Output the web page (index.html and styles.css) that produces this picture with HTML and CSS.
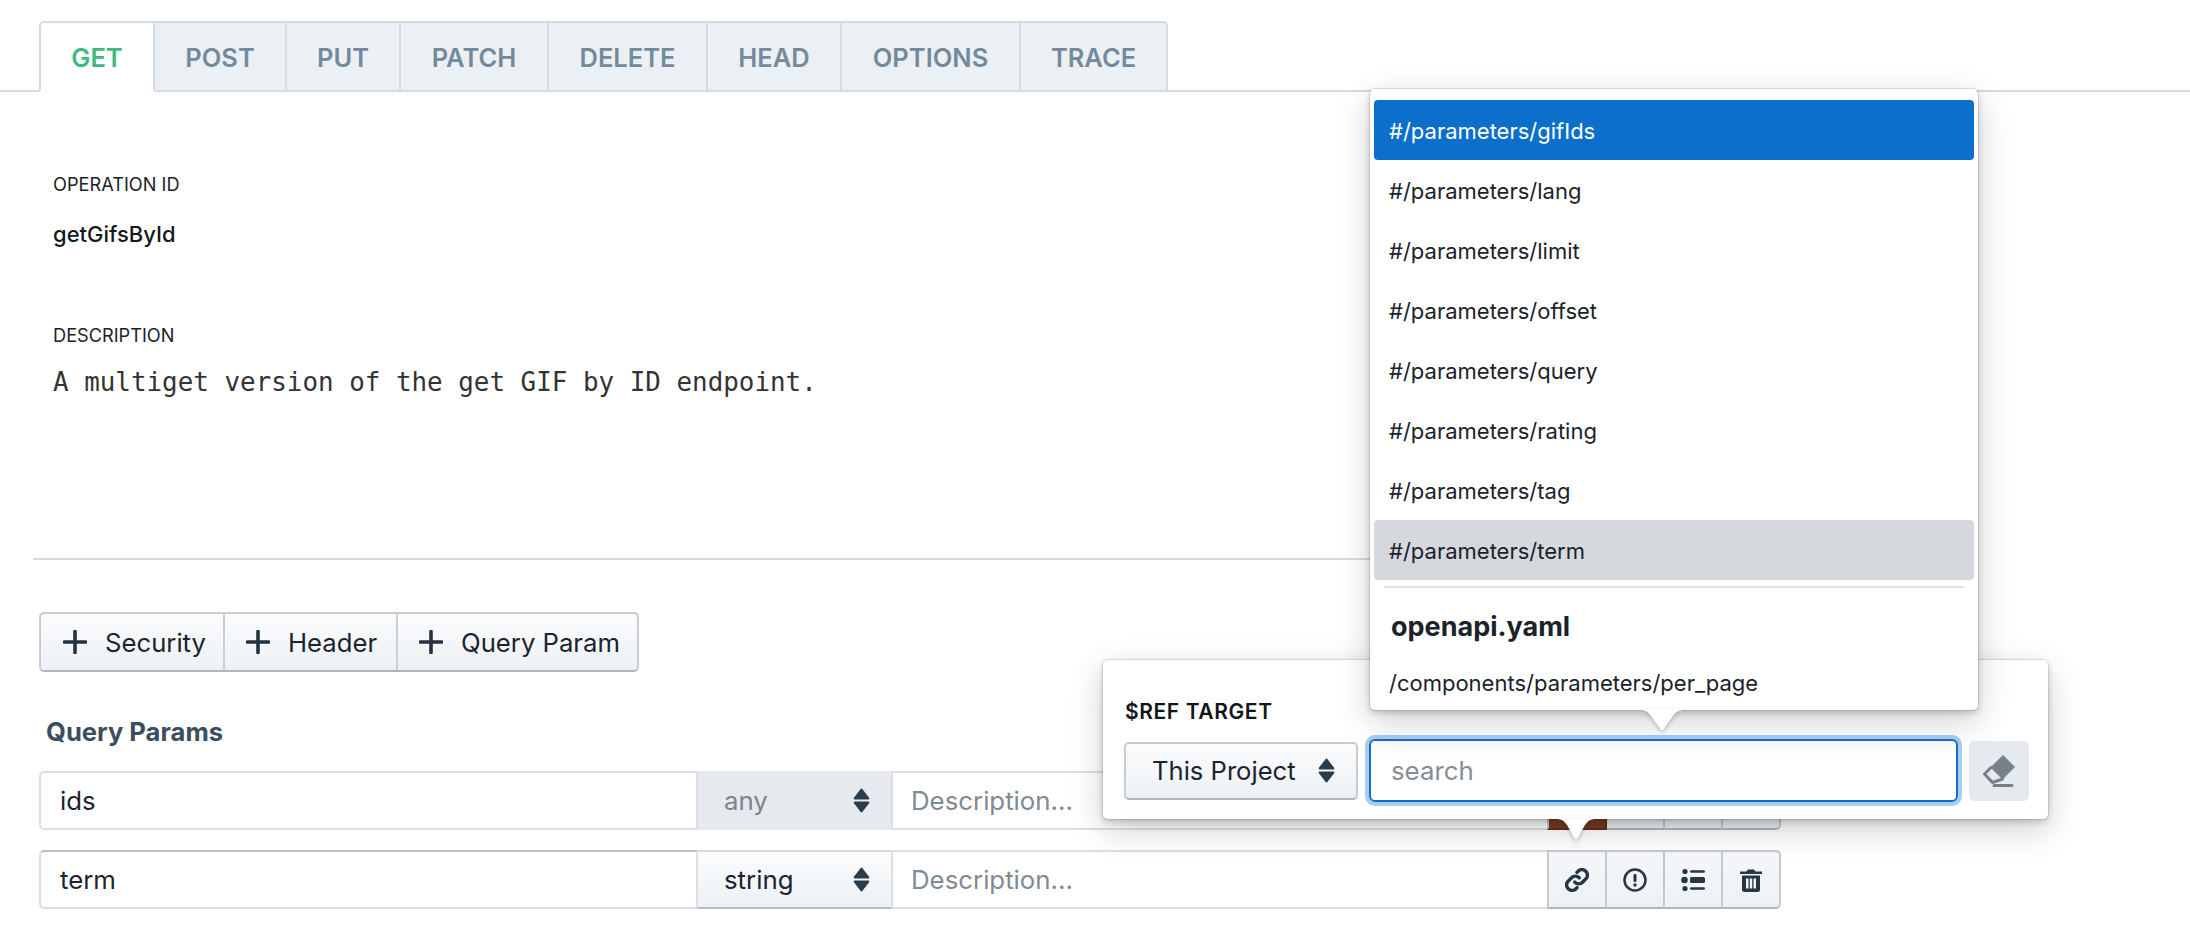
FILE: index.html
```html
<!DOCTYPE html>
<html lang="en">
<head>
<meta charset="utf-8">
<title>Operation editor</title>
<link rel="stylesheet" href="styles.css">
</head>
<body>
<div class="page">
  <nav class="tabs">
    <div class="tab tab-active">GET</div>
    <div class="tab tab-post">POST</div>
    <div class="tab tab-put">PUT</div>
    <div class="tab tab-patch">PATCH</div>
    <div class="tab tab-delete">DELETE</div>
    <div class="tab tab-head">HEAD</div>
    <div class="tab tab-options">OPTIONS</div>
    <div class="tab tab-trace">TRACE</div>
  </nav>

  <section class="meta">
    <div class="label">OPERATION ID</div>
    <div class="opid">getGifsById</div>
    <div class="label label-desc">DESCRIPTION</div>
    <div class="desc">A multiget version of the get GIF by ID endpoint.</div>
  </section>

  <hr class="divider">

  <div class="btn-group">
    <div class="add-btn add-security"><svg class="plus" viewBox="0 0 24 24"><path d="M12 1.5v21M1.500 12h21"/></svg>Security</div>
    <div class="add-btn add-header"><svg class="plus" viewBox="0 0 24 24"><path d="M12 1.500v21M1.500 12h21"/></svg>Header</div>
    <div class="add-btn add-query"><svg class="plus" viewBox="0 0 24 24"><path d="M12 1.500v21M1.500 12h21"/></svg>Query Param</div>
  </div>

  <h3 class="section-title">Query Params</h3>

  <div class="param-row">
    <div class="cell name">ids</div>
    <div class="cell type type-disabled">any
      <svg class="caret" viewBox="0 0 16 24"><path d="M8 1.500 14.500 10h-13zM8 22.500 1.500 14h13z"/></svg>
    </div>
    <div class="cell descr">Description...</div>
    <div class="actions">
      <div class="act act-active"></div>
      <div class="act"></div>
      <div class="act"></div>
      <div class="act act-last"></div>
    </div>
  </div>

  <div class="param-row row-second">
    <div class="cell name name-focus">term</div>
    <div class="cell type">string
      <svg class="caret" viewBox="0 0 16 24"><path d="M8 1.500 14.500 10h-13zM8 22.500 1.500 14h13z"/></svg>
    </div>
    <div class="cell descr">Description...</div>
    <div class="actions">
      <div class="act">
        <svg class="ico" viewBox="1 1 22 22"><path class="link-line" d="M10 14a5 5 0 0 0 7 0l3.500-3.500a5 5 0 0 0-7-7L12 5"/><path class="link-line" d="M14 10a5 5 0 0 0-7 0l-3.500 3.500a5 5 0 0 0 7 7L12 19"/></svg>
      </div>
      <div class="act">
        <svg class="ico" viewBox="0 0 24 24"><circle class="ring" cx="12" cy="12" r="10.500"/><rect x="10.500" y="6" width="3" height="8" rx="1.200"/><circle cx="12" cy="17" r="1.700"/></svg>
      </div>
      <div class="act">
        <svg class="ico" viewBox="0 0 24 24"><circle cx="4" cy="3.500" r="2.600"/><circle cx="3.500" cy="12" r="3.300"/><circle cx="4" cy="20.500" r="2.600"/><rect x="9" y="2.200" width="15" height="2.600" rx="1.300"/><rect x="9" y="9" width="15" height="6" rx="1.500"/><rect x="9" y="19.200" width="15" height="2.600" rx="1.300"/></svg>
      </div>
      <div class="act act-last">
        <svg class="ico" viewBox="0 0 24 24"><path d="M1 3.500h6.500L9 1.500h6l1.500 2H23v2.400H1zM3 7.500h18v14a2.500 2.500 0 0 1-2.500 2.500h-13A2.500 2.500 0 0 1 3 21.500zm4 3v10h2.500v-10zm3.800 0v10h2.400v-10zm3.700 0v10H17v-10z" fill-rule="evenodd"/></svg>
      </div>
    </div>
  </div>

  <div class="popover">
    <div class="ref-title">$REF TARGET</div>
    <div class="ref-controls">
      <div class="project-select">This Project
        <svg class="caret" viewBox="0 0 16 24"><path d="M8 1.500 14.500 10h-13zM8 22.500 1.500 14h13z"/></svg>
      </div>
      <div class="search-box">search</div>
      <div class="erase-btn">
        <svg class="eraser" viewBox="0 0 32 33"><path class="eraser-fill" d="M20 1.500 31.500 13 19.500 25 8 13.500z"/><path class="eraser-line" d="M8 13.500 1.500 20 9.500 28.500 19.500 25"/><path class="eraser-line" d="M11 31.500h18"/></svg>
      </div>
    </div>
    <svg class="arrow arrow-bottom" viewBox="0 0 40 21"><path d="M0 0c6 0 8 2 11 6l7 12.500c1 2 3 2 4 0L29 6c3-4 5-6 11-6z"/></svg>
  </div>

  <div class="dropdown">
    <div class="menu-item item-active">#/parameters/gifIds</div>
    <div class="menu-item">#/parameters/lang</div>
    <div class="menu-item">#/parameters/limit</div>
    <div class="menu-item">#/parameters/offset</div>
    <div class="menu-item">#/parameters/query</div>
    <div class="menu-item">#/parameters/rating</div>
    <div class="menu-item">#/parameters/tag</div>
    <div class="menu-item item-hover">#/parameters/term</div>
    <div class="menu-divider"></div>
    <div class="menu-heading">openapi.yaml</div>
    <div class="menu-item item-clip">/components/parameters/per_page</div>
    <svg class="arrow arrow-drop" viewBox="0 0 46 21"><path d="M0 0c7 0 9 2 12 6l9 12.500c1 2 3 2 4 0L34 6c3-4 5-6 12-6z"/></svg>
  </div>
</div>
</body>
</html>
```
FILE: styles.css
```css
* { box-sizing: border-box; }
html, body { margin: 0; padding: 0; background: #fff; }
body { font-family: Inter, "Liberation Sans", sans-serif; color: #1b2430; overflow: hidden; }
.page { position: relative; width: 2190px; height: 944px; padding-top: 21px; overflow: hidden; }

/* tabs */
.tabs { display: flex; height: 71px; padding-left: 39px; border-bottom: 2px solid #d2dce3; }
.tab {
  height: 71px; display: flex; align-items: center; justify-content: center; padding-top: 2px;
  background: #ebf0f4; color: #738a9c; font-size: 25.500px; font-weight: 600;
  border: 2px solid #d2dce3; border-left: 0;
}
.tab-active { width: 116px; background: #fff; color: #3dbb7d; border-left: 2px solid #d2dce3; border-bottom-color: #fff; border-radius: 5px 0 0 0; }
.tab-post { width: 132px; }
.tab-put { width: 114px; }
.tab-patch { width: 148px; }
.tab-delete { width: 159px; }
.tab-head { width: 134px; }
.tab-options { width: 179px; }
.tab-trace { width: 147px; border-radius: 0 5px 0 0; }

/* meta */
.meta { padding: 82px 0 0 53px; }
.label { font-size: 18.200px; line-height: 20px; color: #1b2229; }
.opid { margin-top: 30px; font-size: 22px; line-height: 20px; font-weight: 500; color: #14191f; }
.label-desc { margin-top: 81px; }
.desc { margin-top: 21px; font-family: "DejaVu Sans Mono", monospace; font-size: 25.900px; line-height: 32px; color: #333; }

.divider { margin: 160px 0 0 33px; width: 1340px; height: 2px; border: 0; background: #d2dde3; }

/* add buttons */
.btn-group {
  display: flex; width: 600px; height: 60px; margin: 52px 0 0 39px;
  border: 2px solid #c8ccd0; border-bottom-color: #b0b5ba; border-radius: 5px;
  background: linear-gradient(#fbfcfd, #edf1f5);
}
.add-btn { display: flex; align-items: center; padding-left: 21px; font-size: 25.700px; color: #1b2430; border-right: 2px solid #ccd0d4; }
.add-btn:last-child { border-right: 0; }
.add-security { width: 184px; padding-left: 22px; }
.add-header { width: 173px; }
.add-query { flex: 1; }
.plus { width: 24px; height: 24px; margin-right: 18px; flex: none; }
.plus path { fill: none; stroke: #25323f; stroke-width: 3.600; stroke-linecap: round; }

.section-title { margin: 44px 0 0 46px; font-size: 25.600px; line-height: 32px; font-weight: 700; color: #3c4e5e; }

/* rows */
.param-row { display: flex; width: 1742px; height: 59px; margin: 23px 0 0 39px; font-size: 25.800px; }
.row-second { margin-top: 20px; }
.cell { height: 100%; display: flex; align-items: center; border: 2px solid #dcdfe2; }
.name { width: 659px; padding-left: 19px; border-radius: 5px 0 0 5px; color: #1b2430; }
.name-focus { border-top-color: #bcc0c4; }
.type { width: 193px; padding-left: 26px; position: relative; border-left: 0; border-right: 0; border-top-color: #d5d8dc; border-bottom-color: #b6bbc0; background: linear-gradient(#fbfcfd, #edf1f5); color: #1b2430; }
.type-disabled { background: #e6eaee; border-color: #e6eaee; color: #7b858f; }
.descr { width: 656px; padding-left: 18px; border-right: 0; color: #808a94; }
.actions { display: flex; width: 234px; }
.act { flex: 1; height: 100%; display: flex; align-items: center; justify-content: center; background: linear-gradient(#f6f8fa, #edf1f5); border: 2px solid #c6cacd; border-left: 0; border-bottom-color: #b0b5ba; }
.act:first-child { border-left: 2px solid #c6cacd; }
.act-last { border-radius: 0 5px 5px 0; }
.act-active { background: #7a391c; border-color: #5e2c16; }
.ico { width: 24px; height: 24px; fill: #263645; }
.ring { fill: none; stroke: #263645; stroke-width: 2.500; }
.link-line { fill: none; stroke: #263645; stroke-width: 3.200; stroke-linecap: round; stroke-linejoin: round; }
.caret { position: absolute; right: 21px; top: 50%; width: 17px; height: 25px; margin-top: -13px; fill: #2b3c4a; stroke: #2b3c4a; stroke-width: 2; stroke-linejoin: round; }

/* popover */
.popover {
  position: absolute; left: 1103px; top: 660px; width: 945px; height: 159px;
  padding: 40px 19px 0 21px; background: #fff; border-radius: 5px;
  box-shadow: 0 0 0 1px rgba(16,22,26,.1), 0 3px 6px rgba(16,22,26,.2), 0 11px 34px rgba(16,22,26,.2);
}
.ref-title { margin-left: 1px; font-size: 21px; line-height: 24px; font-weight: 600; color: #11161b; letter-spacing: .6px; }
.ref-controls { display: flex; align-items: center; margin-top: 15px; }
.project-select {
  position: relative; display: flex; align-items: center; flex: none; width: 234px; height: 58px; padding-left: 26px; font-size: 25.600px; color: #1b2430;
  border: 2px solid #c8ccd0; border-bottom-color: #b0b5ba; border-radius: 5px; background: linear-gradient(#fbfcfd, #edf1f5);
}
.search-box {
  display: flex; align-items: center; flex: none; width: 589px; height: 63px; margin-left: 11px; padding-left: 20px; font-size: 25.800px; color: #858e97;
  border: 2px solid #0c6fcb; border-radius: 6px; box-shadow: 0 0 0 4px #aacdec; background: linear-gradient(#fafafa, #fff 30%);
}
.erase-btn { display: flex; align-items: center; justify-content: center; flex: none; width: 60px; height: 60px; margin-left: 11px; background: #e6eaef; border-radius: 5px; }
.eraser { width: 32px; height: 33px; }
.eraser-fill { fill: #76808a; stroke: #76808a; stroke-width: 1; stroke-linejoin: round; }
.eraser-line { fill: none; stroke: #76808a; stroke-width: 3; stroke-linecap: round; stroke-linejoin: round; }

.arrow { position: absolute; display: block; fill: #fff; filter: drop-shadow(0 2px 2px rgba(16,22,26,.25)); }
.arrow-bottom { left: 453px; top: 159px; width: 40px; height: 21px; }
.arrow-drop { left: 269px; top: 621px; width: 46px; height: 21px; }

/* dropdown */
.dropdown {
  position: absolute; left: 1370px; top: 89px; width: 608px; height: 621px;
  padding: 11px 4px 0; background: #fff; border-radius: 5px;
  box-shadow: 0 0 0 1px rgba(16,22,26,.1), 0 3px 6px rgba(16,22,26,.2), 0 11px 34px rgba(16,22,26,.2);
}
.menu-item { height: 60px; padding: 2px 0 0 15px; display: flex; align-items: center; border-radius: 4px; font-size: 22px; color: #1b2229; }
.item-active { background: #0c6fcb; color: #fff; }
.item-hover { background: #d5d9dd; }
.menu-divider { height: 2px; margin: 6px 10px 0; background: #dfe1e3; }
.menu-heading { margin: 23px 0 0 17px; font-size: 27px; line-height: 32px; font-weight: 700; color: #1b2229; }
.item-clip { margin-top: 11px; height: 56px; align-items: center; }
```
